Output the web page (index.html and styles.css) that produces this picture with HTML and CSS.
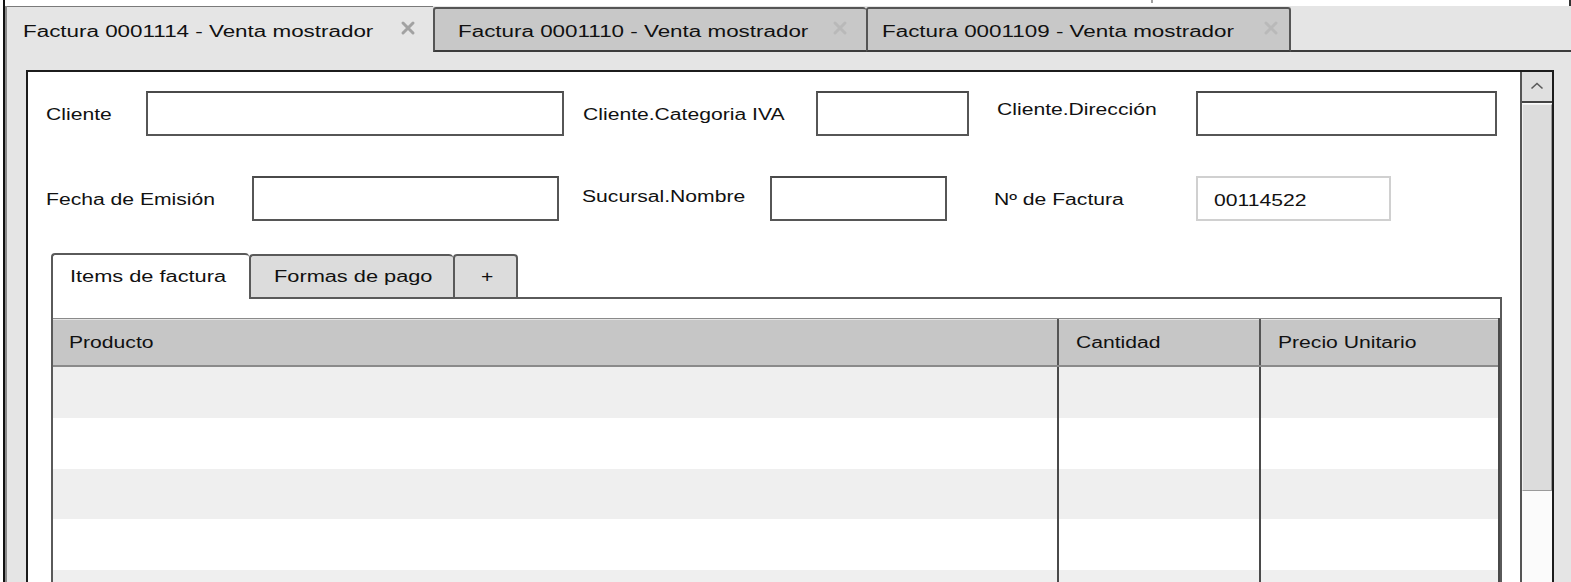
FILE: index.html
```html
<!DOCTYPE html>
<html lang="es">
<head>
<meta charset="utf-8">
<title>Facturas</title>
<link rel="stylesheet" href="styles.css">
</head>
<body>
<div class="app">
  <div class="topstrip"><span class="tick"></span></div>
  <div class="window">
    <div class="tabbar">
      <div class="tab active tab1">
        <span class="title"><span class="t tw">Factura 0001114 - Venta mostrador</span></span>
        <svg class="close" width="16" height="16" viewBox="0 0 16 16"><path d="M3 3L13 13M13 3L3 13" stroke="#a2a2a2" stroke-width="3" stroke-linecap="round"/></svg>
      </div>
      <div class="tab tab2">
        <span class="title"><span class="t tw">Factura 0001110 - Venta mostrador</span></span>
        <svg class="close" width="16" height="16" viewBox="0 0 16 16"><path d="M3 3L13 13M13 3L3 13" stroke="#b9b9b9" stroke-width="3" stroke-linecap="round"/></svg>
      </div>
      <div class="tab tab3">
        <span class="title"><span class="t tw">Factura 0001109 - Venta mostrador</span></span>
        <svg class="close" width="16" height="16" viewBox="0 0 16 16"><path d="M3 3L13 13M13 3L3 13" stroke="#b9b9b9" stroke-width="3" stroke-linecap="round"/></svg>
      </div>
      <div class="tabfill"></div>
    </div>
    <div class="body">
      <div class="scrollpane">
        <div class="viewport">
          <div class="row row1">
            <div class="lbl w100"><span class="t">Cliente</span></div>
            <div class="field w418"></div>
            <div class="lbl w252 p19"><span class="t">Cliente.Categoria IVA</span></div>
            <div class="field w153"></div>
            <div class="lbl w227 p28 raise"><span class="t">Cliente.Dirección</span></div>
            <div class="field w301"></div>
          </div>
          <div class="row row2">
            <div class="lbl w206"><span class="t">Fecha de Emisión</span></div>
            <div class="field w307"></div>
            <div class="lbl w211 p23 raise-s"><span class="t">Sucursal.Nombre</span></div>
            <div class="field w177"></div>
            <div class="lbl w249 p47"><span class="t">Nº de Factura</span></div>
            <div class="field ro w195"><span class="t">00114522</span></div>
          </div>
          <div class="itabs">
            <div class="itab active w198 p17"><span class="t ti">Items de factura</span></div>
            <div class="itab w204 p23"><span class="t ti">Formas de pago</span></div>
            <div class="itab plus w65 p26"><span class="t">+</span></div>
            <div class="ifill"></div>
          </div>
          <div class="ipanel">
            <div class="table">
              <div class="thead">
                <div class="th"><span class="t">Producto</span></div>
                <div class="th"><span class="t">Cantidad</span></div>
                <div class="th"><span class="t">Precio Unitario</span></div>
              </div>
              <div class="tr"><div class="td"></div><div class="td"></div><div class="td"></div></div>
              <div class="tr"><div class="td"></div><div class="td"></div><div class="td"></div></div>
              <div class="tr"><div class="td"></div><div class="td"></div><div class="td"></div></div>
              <div class="tr"><div class="td"></div><div class="td"></div><div class="td"></div></div>
              <div class="tr"><div class="td"></div><div class="td"></div><div class="td"></div></div>
            </div>
          </div>
        </div>
        <div class="vscroll">
          <div class="sbtn">
            <svg width="14" height="8" viewBox="0 0 14 8"><polyline points="1.5,6.5 7,1.5 12.5,6.5" fill="none" stroke="#5a5a5a" stroke-width="1.6"/></svg>
          </div>
          <div class="thumb"></div>
        </div>
      </div>
    </div>
  </div>
</div>
</body>
</html>
```
FILE: styles.css
```css
* { box-sizing: border-box; margin: 0; padding: 0; }
html, body { width: 1571px; height: 582px; overflow: hidden; background: #fff; }
body { font-family: "Liberation Sans", Arial, sans-serif; font-size: 16px; color: #111; }

.t { display: inline-block; white-space: nowrap; transform: scaleX(1.32); transform-origin: 0 50%; }
.t.tw { transform: scaleX(1.40); }
.t.ti { transform: scaleX(1.36); }

.app { margin-left: 3px; height: 582px; border-left: 2px solid #111; display: flex; flex-direction: column; }
.topstrip { height: 6px; display: flex; border-right: 2px solid #333; }
.tick { width: 2px; height: 3px; margin-left: 1146px; background: #a0a0a0; }

.window { flex: 1; min-height: 0; display: flex; flex-direction: column; background: #e5e5e5; border-left: 2px solid #8a8a8a; }

.tabbar { height: 46px; display: flex; align-items: flex-end; }
.tab { height: 45px; display: flex; align-items: center; padding-top: 4px; background: #c8c8c8;
  border: 2px solid #555; border-right: none; border-bottom-color: #3c3c3c; border-radius: 3px 3px 0 0; }
.tab .title { flex: 1; min-width: 0; }
.tab .close { flex: none; margin-bottom: 8px; }
.tab.active { height: 46px; background: #e5e5e5; border: none; border-top: 1px solid #7a7a7a; border-radius: 0; }
.tab1 { width: 426px; padding-left: 16px; padding-right: 17px; }
.tab2 { width: 433px; padding-left: 23px; padding-right: 18px; }
.tab3 { width: 425px; padding-left: 14px; padding-right: 10px; border-right: 2px solid #555; }
.tabfill { flex: 1; height: 100%; border-bottom: 2px solid #3c3c3c; }

.body { flex: 1; min-height: 0; display: flex; flex-direction: column; padding: 18px 17px 0 19px; }
.scrollpane { flex: 1; min-height: 0; display: flex; border: 2px solid #1c1c1c; border-bottom: none; overflow: hidden; }

.viewport { flex: 1; min-width: 0; background: #fff; padding: 19px 18px 0 18px; }

.row { display: flex; align-items: center; }
.row2 { margin-top: 40px; }
.lbl { height: 45px; display: flex; align-items: center; padding-top: 2px; }
.lbl.raise { padding-top: 0; padding-bottom: 8px; }
.lbl.raise-s { padding-top: 0; padding-bottom: 4px; }
.field { height: 45px; background: #fff; border: 2px solid #565656; border-top-color: #4a4a4a; display: flex; align-items: center; }
.field.ro { border-color: #d0d0d0; padding-left: 16px; padding-top: 4px; }

.w100 { width: 100px; } .w418 { width: 418px; } .w252 { width: 252px; } .w153 { width: 153px; }
.w227 { width: 227px; } .w301 { width: 301px; } .w206 { width: 206px; } .w307 { width: 307px; }
.w211 { width: 211px; } .w177 { width: 177px; } .w249 { width: 249px; } .w195 { width: 195px; }
.w198 { width: 198px; } .w204 { width: 204px; } .w65 { width: 65px; }
.p19 { padding-left: 19px; } .p28 { padding-left: 28px; } .p23 { padding-left: 23px; }
.p47 { padding-left: 47px; } .p17 { padding-left: 17px; } .p26 { padding-left: 26px; }

.itabs { margin-top: 32px; margin-left: 5px; height: 46px; display: flex; align-items: flex-end; }
.itab { height: 45px; display: flex; align-items: center; background: #dcdcdc;
  border: 2px solid #5a5a5a; border-right: none; border-radius: 4px 4px 0 0; }
.itab.active { height: 46px; background: #fff; border-bottom: none; }
.itab.plus { border-right: 2px solid #5a5a5a; }
.ifill { flex: 1; height: 100%; border-bottom: 2px solid #5a5a5a; }

.ipanel { margin-left: 5px; border: 2px solid #5a5a5a; border-top: none; border-bottom: none; padding-top: 19px; height: 400px; }

.table { border-right: 2px solid #4a4a4a; }
.thead, .tr { display: grid; grid-template-columns: 1004px 202px 1fr; }
.thead { height: 49px; background: #c6c6c6; border-top: 1px solid #8a8a8a; border-bottom: 2px solid #8a8a8a; box-shadow: inset 0 1px 0 #e6e6e6; }
.th { display: flex; align-items: center; padding-left: 16px; padding-top: 2px; }
.th + .th { border-left: 2px solid #555; padding-left: 17px; }
.tr { height: 51px; }
.tr:nth-child(even) { background: #efefef; }
.tr:nth-child(odd) { background: #fff; }
.tr:nth-child(4) { height: 50px; }
.td + .td { border-left: 2px solid #4a4a4a; }

.vscroll { width: 32px; flex: none; display: flex; flex-direction: column; background: #fbfbfb; border-left: 2px solid #555; }
.sbtn { height: 31px; display: flex; align-items: center; justify-content: center; background: #e0e0e0; border-bottom: 2px solid #444; padding-bottom: 2px; }
.thumb { margin-top: 1px; height: 387px; background: #dcdcdc; border: 1px solid #9a9a9a; border-top-color: #f0f0f0; border-left-color: #f0f0f0; }
```
